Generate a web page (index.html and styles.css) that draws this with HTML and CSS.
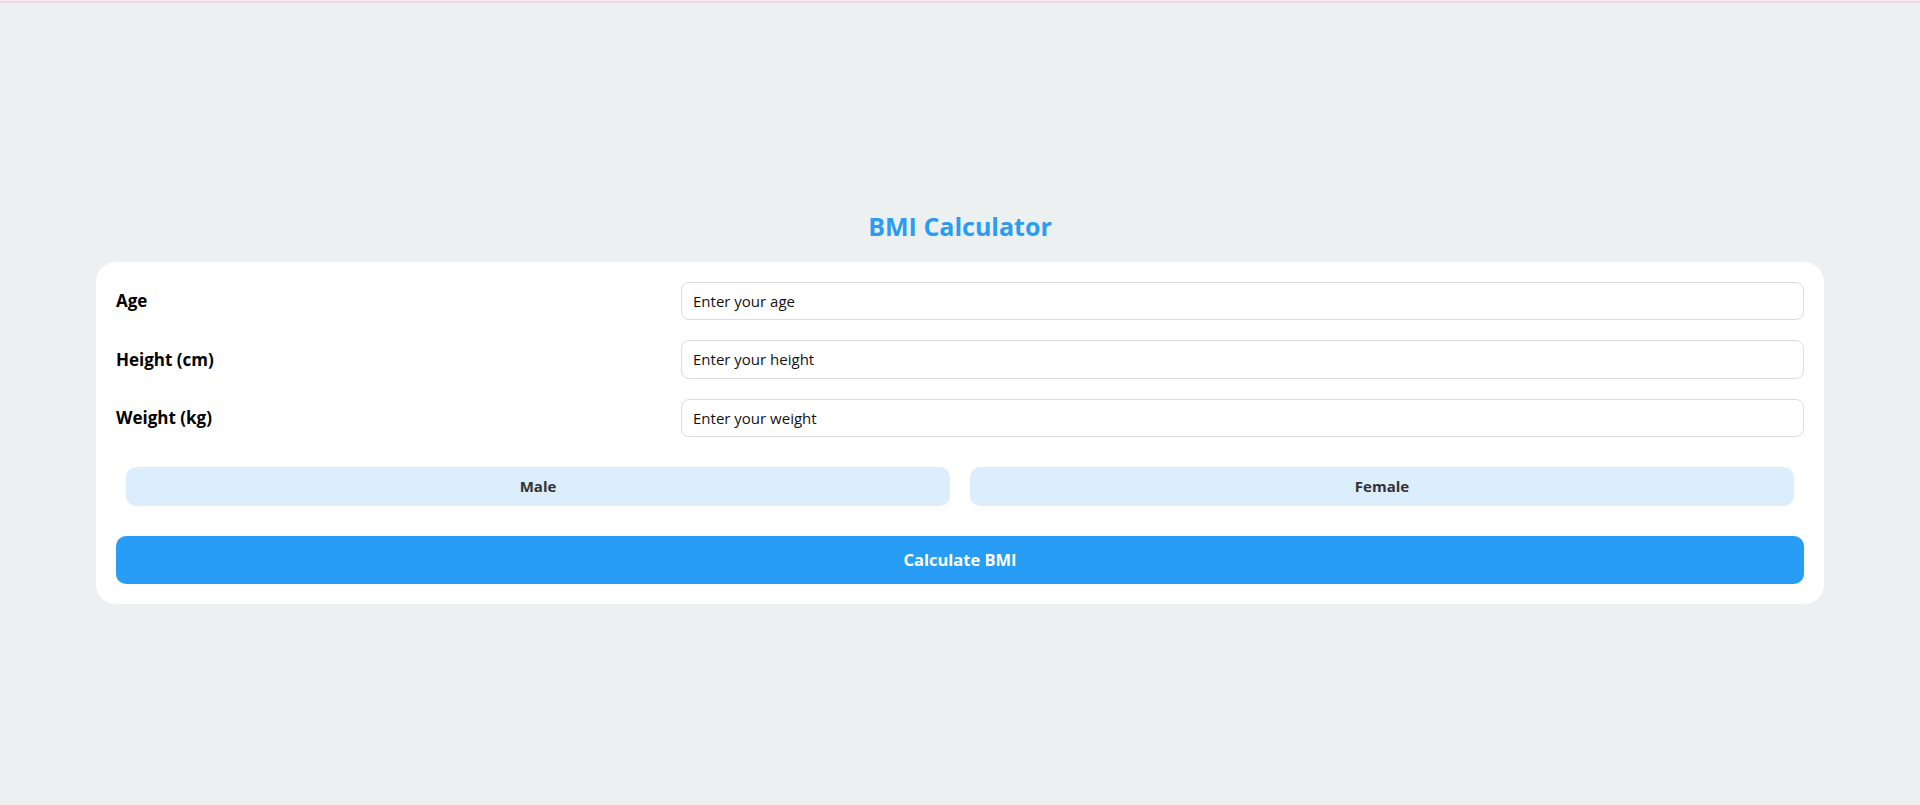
FILE: index.html
```html
<!DOCTYPE html>
<html lang="en">
<head>
<meta charset="utf-8">
<title>BMI Calculator</title>
<link rel="stylesheet" href="styles.css">
</head>
<body>
<div class="topbar"></div>
<main class="page">
  <h1 class="title">BMI Calculator</h1>
  <form class="card">
    <div class="row">
      <label class="label" for="age">Age</label>
      <input class="field" id="age" type="text" placeholder="Enter your age">
    </div>
    <div class="row">
      <label class="label" for="height">Height (cm)</label>
      <input class="field" id="height" type="text" placeholder="Enter your height">
    </div>
    <div class="row">
      <label class="label" for="weight">Weight (kg)</label>
      <input class="field" id="weight" type="text" placeholder="Enter your weight">
    </div>
    <div class="gender">
      <button type="button" class="gender-btn">Male</button>
      <button type="button" class="gender-btn">Female</button>
    </div>
    <button type="button" class="calc">Calculate BMI</button>
  </form>
</main>
</body>
</html>
```
FILE: styles.css
```css
* { box-sizing: border-box; }
html, body { margin: 0; padding: 0; }
body {
  background: #ecf0f1;
  font-family: "Open Sans", "Noto Sans", sans-serif;
  color: #000;
  height: 805px;
  position: relative;
}
.topbar {
  position: absolute;
  top: 0; left: 0; right: 0;
  height: 3px;
  background: linear-gradient(#f7e9ee 0 1px, #f3d8e1 1px 3px);
}
.page {
  height: 805px;
  display: flex;
  flex-direction: column;
  justify-content: center;
  align-items: center;
}
.title {
  margin: 8px 0 20px;
  font-size: 25px;
  line-height: 32px;
  font-weight: 700;
  color: #2a9cf4;
  text-align: center;
}
.card {
  width: 90%;
  background: #fff;
  border-radius: 20px;
  padding: 20px;
  display: flex;
  flex-direction: column;
}
.row {
  display: grid;
  grid-template-columns: 565px 1fr;
  align-items: center;
  margin-bottom: 20px;
}
.label {
  font-size: 17px;
  font-weight: 700;
}
.field {
  height: 38.5px;
  border: 1px solid #dcdcdc;
  border-radius: 8px;
  padding: 0 11px;
  font-family: inherit;
  font-size: 15px;
  color: #000;
  background: #fff;
  outline: none;
}
.field::placeholder { color: #111; opacity: 1; }
.gender {
  display: flex;
  margin-bottom: 20px;
}
.gender-btn {
  flex: 1;
  margin: 10px;
  height: 38.5px;
  border: none;
  border-radius: 10px;
  background: #dcedfc;
  color: #333;
  font-family: inherit;
  font-size: 15px;
  font-weight: 700;
}
.calc {
  height: 48px;
  border: none;
  border-radius: 10px;
  background: #289df5;
  color: #fff;
  font-family: inherit;
  font-size: 16.5px;
  font-weight: 700;
}
```
